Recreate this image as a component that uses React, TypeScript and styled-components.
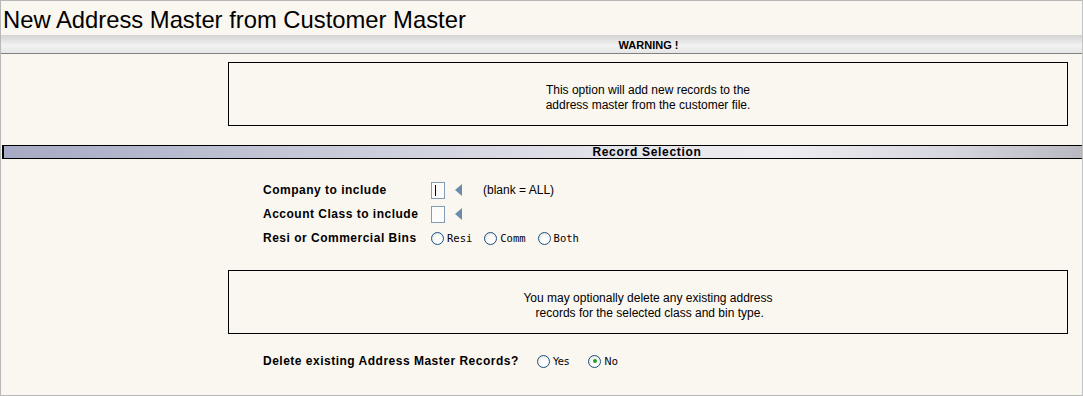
import React, { useState } from "react";
import styled, { createGlobalStyle } from "styled-components";

const GlobalStyle = createGlobalStyle`
  html, body {
    margin: 0;
    padding: 0;
    background: #ffffff;
  }
  body {
    font-family: "Liberation Sans", Arial, sans-serif;
  }
`;

const Frame = styled.div`
  width: 1081px;
  height: 394px;
  background: #faf6f0;
  border: 1px solid #b8b8b8;
  border-right-color: #c4c4c4;
  overflow: hidden;
`;

const Title = styled.h1`
  margin: 0;
  height: 35px;
  padding: 6px 0 0 2px;
  box-sizing: border-box;
  font-size: 23.8px;
  font-weight: normal;
  line-height: 26px;
  color: #000;
  border-bottom: 1px solid #d4d4d4;
`;

const WarningBar = styled.div`
  height: 17px;
  padding: 0 14px 0 228px;
  background: linear-gradient(to bottom, #d6d6d6 0%, #f2f2f2 55%, #e6e6e6 100%);
  border-bottom: 1px solid #808080;
  font-size: 11px;
  font-weight: bold;
  line-height: 18px;
  text-align: center;
  color: #000;
`;

const NoteRow = styled.div<{ $top: number }>`
  padding: ${(p) => p.$top}px 14px 0 227px;
`;

const NoteBox = styled.div`
  height: 64px;
  border: 1px solid #000;
  padding-top: 20px;
  box-sizing: border-box;
  font-size: 12px;
  line-height: 15px;
  text-align: center;
  color: #000;
`;

const SectionBar = styled.div`
  margin: 19px 0 0 1px;
  height: 12px;
  padding: 0 14px 0 222px;
  border-top: 1px solid #000;
  border-bottom: 1px solid #000;
  border-left: 2px solid #000;
  background: linear-gradient(
    to right,
    #a6aac4 0%,
    #c8cad8 30%,
    #e2e2ea 55%,
    #eeedf1 72%,
    #d6d6de 88%,
    #b9b9c1 100%
  );
  font-size: 12px;
  font-weight: bold;
  letter-spacing: 0.7px;
  line-height: 13px;
  text-align: center;
  color: #000;
`;

const Form = styled.div`
  padding: 22px 0 0 262px;
  display: flex;
  flex-direction: column;
  gap: 6px;
`;

const Row = styled.div`
  display: flex;
  align-items: center;
  height: 18px;
`;

const Label = styled.span<{ $width: number }>`
  width: ${(p) => p.$width}px;
  font-size: 12px;
  font-weight: bold;
  letter-spacing: 0.5px;
  color: #000;
`;

const TextBox = styled.div`
  width: 12px;
  height: 15px;
  border: 1px solid #7f9db9;
  background: #fdfcfa;
  position: relative;
`;

const Caret = styled.span`
  position: absolute;
  left: 3px;
  top: 2px;
  width: 1px;
  height: 11px;
  background: #000;
`;

const Prompt = styled.span`
  margin-left: 10px;
  width: 0;
  height: 0;
  border-top: 6px solid transparent;
  border-bottom: 6px solid transparent;
  border-right: 7px solid #6c8cac;
`;

const Hint = styled.span`
  margin-left: 21px;
  font-size: 12px;
  color: #000;
`;

const RadioGroup = styled.div<{ $gap: number }>`
  display: flex;
  align-items: center;
  gap: ${(p) => p.$gap}px;
`;

const RadioItem = styled.label<{ $mono?: boolean }>`
  display: flex;
  align-items: center;
  gap: 3px;
  font-family: ${(p) =>
    p.$mono ? `"DejaVu Sans Mono", "Liberation Mono", monospace` : `"DejaVu Sans", sans-serif`};
  font-size: ${(p) => (p.$mono ? "10.5px" : "10px")};
  color: #000;
  cursor: pointer;
`;

const Circle = styled.span<{ $on?: boolean }>`
  width: 11px;
  height: 11px;
  border-radius: 50%;
  border: 1px solid #1c5180;
  background: radial-gradient(circle at 60% 65%, #ffffff 30%, #dcdcd6 100%);
  display: flex;
  align-items: center;
  justify-content: center;

  &::after {
    content: "";
    width: 4px;
    height: 4px;
    border-radius: 50%;
    background: ${(p) => (p.$on ? "#21a121" : "transparent")};
  }
`;

const DeleteRow = styled.div`
  padding: 18px 0 0 262px;
  display: flex;
  align-items: center;
  height: 18px;
`;

type RadioProps = {
  options: string[];
  value: string;
  onChange: (v: string) => void;
  gap: number;
  mono?: boolean;
};

const Radios: React.FC<RadioProps> = ({ options, value, onChange, gap, mono }) => (
  <RadioGroup $gap={gap}>
    {options.map((o) => (
      <RadioItem key={o} $mono={mono} onClick={() => onChange(o)}>
        <Circle $on={value === o} />
        {o}
      </RadioItem>
    ))}
  </RadioGroup>
);

const App: React.FC = () => {
  const [bins, setBins] = useState("");
  const [del, setDel] = useState("No");

  return (
    <>
      <GlobalStyle />
      <Frame>
        <Title>New Address Master from Customer Master</Title>
        <WarningBar>WARNING !</WarningBar>
        <NoteRow $top={8}>
          <NoteBox>
            This option will add new records to the
            <br />
            address master from the customer file.
          </NoteBox>
        </NoteRow>
        <SectionBar>Record Selection</SectionBar>
        <Form>
          <Row>
            <Label $width={168}>Company to include</Label>
            <TextBox>
              <Caret />
            </TextBox>
            <Prompt />
            <Hint>(blank = ALL)</Hint>
          </Row>
          <Row>
            <Label $width={168}>Account Class to include</Label>
            <TextBox />
            <Prompt />
          </Row>
          <Row>
            <Label $width={168}>Resi or Commercial Bins</Label>
            <Radios options={["Resi", "Comm", "Both"]} value={bins} onChange={setBins} gap={12} mono />
          </Row>
        </Form>
        <NoteRow $top={23}>
          <NoteBox>
            You may optionally delete any existing address
            <br />
            &nbsp;records for the selected class and bin type.
          </NoteBox>
        </NoteRow>
        <DeleteRow>
          <Label $width={274}>Delete existing Address Master Records?</Label>
          <Radios options={["Yes", "No"]} value={del} onChange={setDel} gap={19} />
        </DeleteRow>
      </Frame>
    </>
  );
};

export default App;
